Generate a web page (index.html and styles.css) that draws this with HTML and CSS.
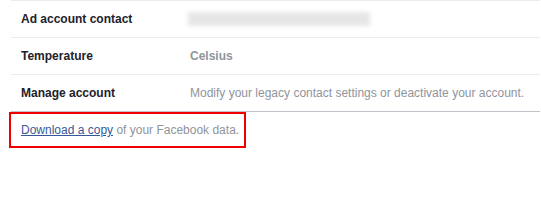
FILE: index.html
```html
<!DOCTYPE html>
<html>
<head>
<meta charset="utf-8">
<link rel="stylesheet" href="styles.css">
</head>
<body>
<div class="settings">
  <div class="row">
    <div class="label">Ad account contact</div>
    <div class="value"><span class="blurred"></span></div>
  </div>
  <div class="row">
    <div class="label">Temperature</div>
    <div class="value strong">Celsius</div>
  </div>
  <div class="row last">
    <div class="label">Manage account</div>
    <div class="value">Modify your legacy contact settings or deactivate your account.</div>
  </div>
  <div class="footer"><a href="#" class="link">Download a copy</a> of your Facebook data.</div>
</div>
</body>
</html>
```
FILE: styles.css
```css
html, body {
  margin: 0;
  padding: 0;
  background: #fff;
}
body {
  font-family: "Liberation Sans", Arial, sans-serif;
  font-size: 12px;
}
.settings {
  margin-left: 11px;
  width: 529px;
  border-top: 1px solid #e9ebee;
}
.row {
  display: grid;
  grid-template-columns: 169px 1fr;
  align-items: center;
  height: 36px;
  padding-left: 10px;
  border-bottom: 1px solid #e9ebee;
}
.row.last {
  border-bottom: 1px solid #bec2c9;
}
.label {
  font-weight: bold;
  color: #1d2129;
}
.value {
  color: #90949c;
  white-space: nowrap;
}
.value.strong {
  font-weight: bold;
}
.blurred {
  display: block;
  width: 182px;
  height: 14px;
  margin-left: -2px;
  background: #e6e6e6;
  filter: blur(2px);
}
.footer {
  width: max-content;
  margin-left: -2px;
  height: 32px;
  line-height: 32px;
  padding: 0 5px 0 10px;
  color: #90949c;
  border: 2px solid #ee0000;
}
.link {
  color: #365899;
  text-decoration: underline;
}
```
